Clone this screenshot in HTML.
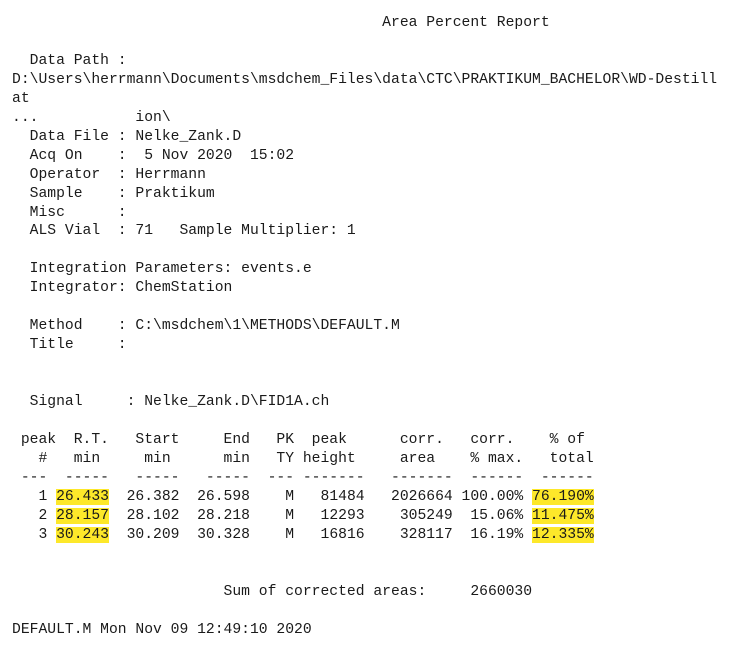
<!DOCTYPE html>
<html><head><meta charset="utf-8"><style>
html,body{margin:0;padding:0;background:#fff;width:739px;height:646px;overflow:hidden}
pre{margin:0;position:absolute;left:12px;top:14px;font-family:"Liberation Mono",monospace;font-size:14.7px;line-height:18.95px;color:#1a1a1a}
.h{background:#fde82a}
</style></head><body><pre>                                          Area Percent Report

  Data Path : 
D:\Users\herrmann\Documents\msdchem_Files\data\CTC\PRAKTIKUM_BACHELOR\WD-Destill
at
...           ion\
  Data File : Nelke_Zank.D
  Acq On    :  5 Nov 2020  15:02
  Operator  : Herrmann
  Sample    : Praktikum
  Misc      :
  ALS Vial  : 71   Sample Multiplier: 1

  Integration Parameters: events.e
  Integrator: ChemStation

  Method    : C:\msdchem\1\METHODS\DEFAULT.M
  Title     :


  Signal     : Nelke_Zank.D\FID1A.ch

 peak  R.T.   Start     End   PK  peak      corr.   corr.    % of
   #   min     min      min   TY height     area    % max.   total
 ---  -----   -----   -----  --- -------   -------  ------  ------
   1 <span class="h">26.433</span>  26.382  26.598    M   81484   2026664 100.00% <span class="h">76.190%</span>
   2 <span class="h">28.157</span>  28.102  28.218    M   12293    305249  15.06% <span class="h">11.475%</span>
   3 <span class="h">30.243</span>  30.209  30.328    M   16816    328117  16.19% <span class="h">12.335%</span>


                        Sum of corrected areas:     2660030

DEFAULT.M Mon Nov 09 12:49:10 2020
</pre></body></html>
